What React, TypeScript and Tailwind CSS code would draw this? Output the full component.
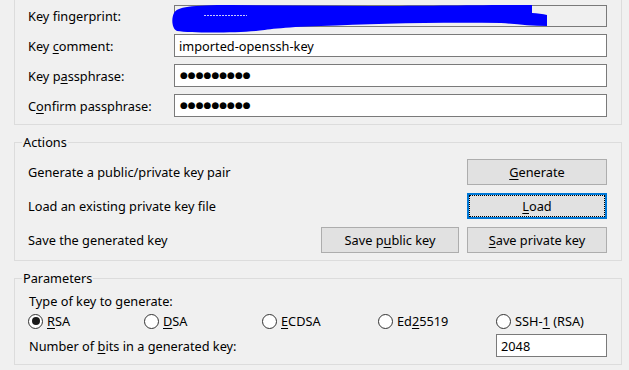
import React from "react";

const U = ({ children }: { children: React.ReactNode }) => (
  <span className="underline decoration-1 underline-offset-[2px]">{children}</span>
);

const Field = ({
  label,
  children,
  h = "h-[23px]",
}: {
  label: React.ReactNode;
  children?: React.ReactNode;
  h?: string;
}) => (
  <div className={`flex items-center ${h}`}>
    <div className="w-[146px] shrink-0">{label}</div>
    <div className="flex-1 h-full border border-[#7a7a7a] bg-white flex items-center pl-[4px]">
      {children}
    </div>
  </div>
);

const Dots = () => (
  <span className="pl-[1px] text-[9px] tracking-[0px] leading-none text-black font-['DejaVu_Sans',sans-serif]">
    ●●●●●●●●●
  </span>
);

const Btn = ({
  children,
  w,
  focus = false,
}: {
  children: React.ReactNode;
  w: string;
  focus?: boolean;
}) =>
  focus ? (
    <div className={`${w} h-[26px] border-2 border-[#0078d7] bg-[#e1e1e1] flex`}>
      <div className="flex-1 border border-dotted border-black flex items-center justify-center">
        {children}
      </div>
    </div>
  ) : (
    <div className={`${w} h-[26px] border border-[#adadad] bg-[#e1e1e1] flex items-center justify-center`}>
      {children}
    </div>
  );

const Radio = ({ checked = false, children }: { checked?: boolean; children: React.ReactNode }) => (
  <div className="flex items-center h-[16px]">
    <div className="w-[15px] h-[15px] rounded-full border border-[#333333] bg-white flex items-center justify-center shrink-0">
      {checked && <div className="w-[8px] h-[8px] rounded-full bg-[#1a1a1a]" />}
    </div>
    <span className="ml-[4px]">{children}</span>
  </div>
);

export default function App() {
  return (
    <div className="w-[629px] h-[370px] overflow-hidden bg-[#f0f0f0] text-[12.75px] leading-[16px] text-black font-['Noto_Sans',sans-serif] pl-[14px] pr-[7px]">
      {/* Key group (top cut off) */}
      <div className="border-x border-b border-[#dcdcdc] pl-[13px] pr-[14px] pt-[5px] pb-[7px] flex flex-col gap-[7px]">
        <div className="flex items-center h-[22px]">
          <div className="w-[146px] shrink-0">
            Key f<U>i</U>ngerprint:
          </div>
          <div className="relative flex-1 h-full border border-[#7a7a7a] bg-[#f0f0f0]">
            <svg
              className="absolute left-[-4px] top-[-1px]"
              width="380"
              height="32"
              viewBox="0 0 380 32"
            >
              <path
                d="M3 8 C6 2 20 0 60 0 L200 1 C260 1 300 0 361 0 L361 8 C366 8 372 9 376 10 L376 21 C360 21 345 19 330 18 C260 17 200 19 150 21 C110 22 95 25 85 26 C60 28 20 28 6 26 C1 24 0 14 3 8 Z"
                fill="#0000ff"
              />
              <line x1="33" y1="10.5" x2="76" y2="10.5" stroke="#c8c8ff" strokeWidth="1" strokeDasharray="2 1" />
            </svg>
          </div>
        </div>
        <Field
          label={
            <>
              Key <U>c</U>omment:
            </>
          }
        >
          <span>imported-openssh-key</span>
        </Field>
        <Field
          label={
            <>
              Key p<U>a</U>ssphrase:
            </>
          }
        >
          <Dots />
        </Field>
        <Field
          label={
            <>
              C<U>o</U>nfirm passphrase:
            </>
          }
        >
          <Dots />
        </Field>
      </div>

      {/* Actions group */}
      <div className="relative mt-[17px] border border-[#dcdcdc] pl-[13px] pr-[14px] pt-[16px] pb-[7px] flex flex-col gap-[8px]">
        <span className="absolute left-[7px] top-[-9px] px-[1px] bg-[#f0f0f0]">Actions</span>
        <div className="flex items-center h-[26px]">
          <div className="flex-1">Generate a public/private key pair</div>
          <Btn w="w-[140px]">
            <span>
              <U>G</U>enerate
            </span>
          </Btn>
        </div>
        <div className="flex items-center h-[26px]">
          <div className="flex-1">Load an existing private key file</div>
          <Btn w="w-[140px]" focus>
            <span>
              <U>L</U>oad
            </span>
          </Btn>
        </div>
        <div className="flex items-center h-[26px]">
          <div className="flex-1">Save the generated key</div>
          <div className="flex gap-[8px]">
            <Btn w="w-[138px]">
              <span>
                Save p<U>u</U>blic key
              </span>
            </Btn>
            <Btn w="w-[140px]">
              <span>
                <U>S</U>ave private key
              </span>
            </Btn>
          </div>
        </div>
      </div>

      {/* Parameters group */}
      <div className="relative mt-[17px] border border-[#dcdcdc] pl-[13px] pr-[14px] pt-[14px] pb-[7px] flex flex-col">
        <span className="absolute left-[7px] top-[-9px] px-[1px] bg-[#f0f0f0]">Parameters</span>
        <div className="h-[16px] pl-[1px]">Type of key to generate:</div>
        <div className="mt-[4px] grid grid-cols-[116px_118px_116px_118px_auto]">
          <Radio checked>
            <U>R</U>SA
          </Radio>
          <Radio>
            <U>D</U>SA
          </Radio>
          <Radio>
            <U>E</U>CDSA
          </Radio>
          <Radio>
            Ed<U>2</U>5519
          </Radio>
          <Radio>
            SSH-<U>1</U> (RSA)
          </Radio>
        </div>
        <div className="mt-[5px] flex items-center h-[23px]">
          <div className="flex-1 pl-[1px]">
            Number of <U>b</U>its in a generated key:
          </div>
          <div className="w-[111px] h-full border border-[#7a7a7a] bg-white flex items-center pl-[4px]">
            2048
          </div>
        </div>
      </div>
    </div>
  );
}
